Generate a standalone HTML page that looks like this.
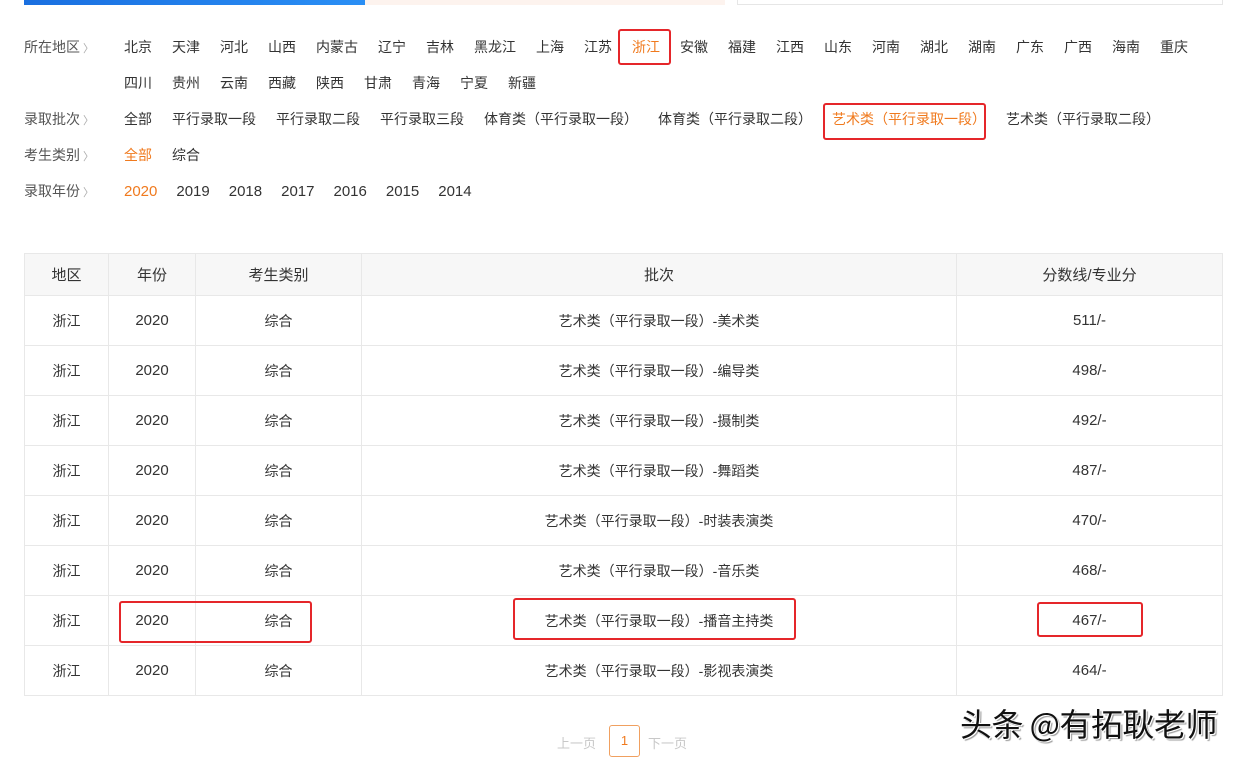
<!DOCTYPE html>
<html><head><meta charset="utf-8"><style>
*{margin:0;padding:0;box-sizing:border-box}
body{width:1241px;height:764px;background:#fff;position:relative;overflow:hidden;font-family:"Liberation Sans","Noto Sans CJK SC",sans-serif;color:#333;font-size:14px}
.abs{position:absolute}
.row{position:absolute;left:24px;display:flex;align-items:center;height:20px;white-space:nowrap}
.lab{width:100px;color:#555;font-size:14px}
.lab:after{content:" 〉";color:#aaa;font-size:11px}
.items{display:flex}
.items span{margin-right:20px;color:#333}
.o{color:#f07a1e!important}
.red{position:absolute;border:2px solid #e5262a;border-radius:3px}
table{position:absolute;left:24px;top:253px;border-collapse:collapse;width:1199px}
td,th{border:1px solid #e8e8e8;text-align:center;font-weight:normal}
th{background:#f7f7f7;height:42px;font-size:15px;color:#333}
td{height:50px;font-size:14px;color:#333}
td.y{font-size:15px}
td.b{font-size:14px}
</style></head><body>
<div class="abs" style="left:24px;top:0;width:341px;height:5px;background:linear-gradient(90deg,#1a6fe0,#2a8ff5)"></div>
<div class="abs" style="left:365px;top:0;width:360px;height:5px;background:#fdf3ee"></div>
<div class="abs" style="left:737px;top:0;width:486px;height:5px;border:1px solid #e6e6e6;border-top:none"></div>

<div class="row" style="top:37px"><div class="lab">所在地区</div><div class="items"><span>北京</span><span>天津</span><span>河北</span><span>山西</span><span>内蒙古</span><span>辽宁</span><span>吉林</span><span>黑龙江</span><span>上海</span><span>江苏</span><span class="o">浙江</span><span>安徽</span><span>福建</span><span>江西</span><span>山东</span><span>河南</span><span>湖北</span><span>湖南</span><span>广东</span><span>广西</span><span>海南</span><span>重庆</span></div></div>
<div class="row" style="top:73px"><div class="lab" style="visibility:hidden">所在地区</div><div class="items"><span>四川</span><span>贵州</span><span>云南</span><span>西藏</span><span>陕西</span><span>甘肃</span><span>青海</span><span>宁夏</span><span>新疆</span></div></div>
<div class="row" style="top:109px"><div class="lab">录取批次</div><div class="items"><span>全部</span><span>平行录取一段</span><span>平行录取二段</span><span>平行录取三段</span><span>体育类（平行录取一段）</span><span>体育类（平行录取二段）</span><span class="o">艺术类（平行录取一段）</span><span>艺术类（平行录取二段）</span></div></div>
<div class="row" style="top:145px"><div class="lab">考生类别</div><div class="items"><span class="o">全部</span><span>综合</span></div></div>
<div class="row" style="top:181px"><div class="lab">录取年份</div><div class="items" style="font-size:15px"><span class="o" style="margin-right:19px">2020</span><span style="margin-right:19px">2019</span><span style="margin-right:19px">2018</span><span style="margin-right:19px">2017</span><span style="margin-right:19px">2016</span><span style="margin-right:19px">2015</span><span>2014</span></div></div>

<div class="red" style="left:618px;top:29px;width:53px;height:36px"></div>
<div class="red" style="left:823px;top:103px;width:163px;height:37px"></div>

<table>
<tr><th style="width:84px">地区</th><th style="width:87px">年份</th><th style="width:166px">考生类别</th><th style="width:595px">批次</th><th>分数线/专业分</th></tr>
<tr><td>浙江</td><td class="y">2020</td><td class="b">综合</td><td class="b">艺术类（平行录取一段）-美术类</td><td class="y">511/-</td></tr>
<tr><td>浙江</td><td class="y">2020</td><td class="b">综合</td><td class="b">艺术类（平行录取一段）-编导类</td><td class="y">498/-</td></tr>
<tr><td>浙江</td><td class="y">2020</td><td class="b">综合</td><td class="b">艺术类（平行录取一段）-摄制类</td><td class="y">492/-</td></tr>
<tr><td>浙江</td><td class="y">2020</td><td class="b">综合</td><td class="b">艺术类（平行录取一段）-舞蹈类</td><td class="y">487/-</td></tr>
<tr><td>浙江</td><td class="y">2020</td><td class="b">综合</td><td class="b">艺术类（平行录取一段）-时装表演类</td><td class="y">470/-</td></tr>
<tr><td>浙江</td><td class="y">2020</td><td class="b">综合</td><td class="b">艺术类（平行录取一段）-音乐类</td><td class="y">468/-</td></tr>
<tr><td>浙江</td><td class="y">2020</td><td class="b">综合</td><td class="b">艺术类（平行录取一段）-播音主持类</td><td class="y">467/-</td></tr>
<tr><td>浙江</td><td class="y">2020</td><td class="b">综合</td><td class="b">艺术类（平行录取一段）-影视表演类</td><td class="y">464/-</td></tr>
</table>

<div class="red" style="left:119px;top:601px;width:193px;height:42px"></div>
<div class="red" style="left:513px;top:598px;width:283px;height:42px"></div>
<div class="red" style="left:1037px;top:602px;width:106px;height:35px"></div>

<div class="abs" style="left:557px;top:733px;font-size:13px;color:#c8c8c8">上一页</div>
<div class="abs" style="left:609px;top:725px;width:31px;height:32px;border:1px solid #f0a060;border-radius:3px;color:#f07a1e;font-size:13px;text-align:center;line-height:30px">1</div>
<div class="abs" style="left:648px;top:733px;font-size:13px;color:#c8c8c8">下一页</div>

<div class="abs" style="left:960px;top:702px;font-size:32px;color:#111;font-family:'Noto Sans CJK SC',sans-serif;letter-spacing:-0.5px;text-shadow:1px 1px 0 #fff,-1px -1px 0 #fff,2px 2px 1px #999;line-height:42px">头条 @有拓耿老师</div>
</body></html>
